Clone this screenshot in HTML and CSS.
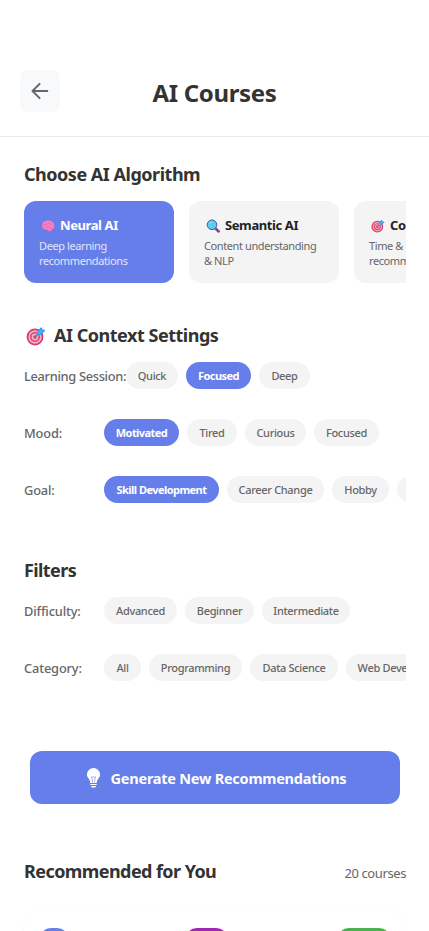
FILE: index.html
```html
<!DOCTYPE html>
<html lang="en">
<head>
<meta charset="utf-8">
<title>AI Courses</title>
<link rel="stylesheet" href="styles.css">
</head>
<body>
<svg class="defs" width="0" height="0" aria-hidden="true">
  <symbol id="target" viewBox="0 0 20 20">
    <circle cx="9" cy="11" r="8.4" fill="#d83b64"/>
    <circle cx="9" cy="11" r="6.7" fill="#efb2c8"/>
    <circle cx="9" cy="11" r="5" fill="#dc4770"/>
    <circle cx="9" cy="11" r="3.4" fill="#efb2c8"/>
    <circle cx="9" cy="11" r="1.7" fill="#d83b64"/>
    <path d="M9 11 15 5" stroke="#4a7fb5" stroke-width="1.3"/>
    <path d="M11.200 5.200 15.300 1l1.200 2.300 3 1-4.400 4.700-3.400.1z" fill="#3d9df0"/>
    <path d="m12.500 7.800 4.200-4.200" stroke="#70c5ff" stroke-width="1"/>
  </symbol>
</svg>
<header class="header">
  <button class="back" aria-label="Back">
    <svg width="18" height="18" viewBox="0 0 18 18" fill="none" stroke="#666" stroke-width="2" stroke-linecap="round" stroke-linejoin="round"><path d="M16.300 9H1.800M8.600 1.900 1.500 9l7.100 7.100"/></svg>
  </button>
  <h1>AI Courses</h1>
</header>
<main class="content">
  <section class="algorithms">
    <h2>Choose AI Algorithm</h2>
    <div class="cards">
      <article class="algorithm active">
        <h3><svg width="14" height="14" viewBox="0 0 14 14"><path d="M1 7.400C.6 4 3 1.700 5.800 1.700c4-1 7.400 1.500 7.500 5 .1 2.200-1 3.400-2.400 3.800-.2 1.600-1.700 2.100-3.200 1.400-1.200-.7-1.600-1.600-2.800-1.500C2.800 10.500 1.200 9.500 1 7.400z" fill="#f77fbe"/><path d="M2.500 7c1-2 2.300-1.300 3.300-2.500M4.500 8.500c1.500.5 2-1.500 3.800-1M7.500 3.500c.3 1.500 2 .8 2.700 2.200M8 9.800c1-.9 2.300-.2 3.200-1.400" fill="none" stroke="#e05cab" stroke-width=".8"/></svg><span>Neural AI</span></h3>
        <p>Deep learning<br>recommendations</p>
      </article>
      <article class="algorithm">
        <h3><svg width="14" height="14" viewBox="0 0 14 14"><path d="m9.500 9.500 3.200 3" stroke="#874684" stroke-width="2.500" stroke-linecap="round"/><circle cx="6" cy="5.800" r="4.800" fill="#5ccbee" stroke="#425ca0"/><path d="M3.500 5A3 3 0 0 1 6 3" fill="none" stroke="#a4eaff"/></svg><span>Semantic AI</span></h3>
        <p>Content understanding<br>&amp; NLP</p>
      </article>
      <article class="algorithm">
        <h3><svg width="14" height="14"><use href="#target"/></svg><span>Contextual AI</span></h3>
        <p>Time &amp; mood<br>recommendations</p>
      </article>
    </div>
  </section>

  <section class="context">
    <h2><svg width="20" height="20"><use href="#target"/></svg><span>AI Context Settings</span></h2>
    <div class="row"><span class="label session">Learning Session:</span><div class="chips"><span class="chip w52">Quick</span><span class="chip w65 active">Focused</span><span class="chip w51">Deep</span></div></div>
    <div class="row"><span class="label">Mood:</span><div class="chips"><span class="chip w75 active">Motivated</span><span class="chip w50">Tired</span><span class="chip w61">Curious</span><span class="chip w65">Focused</span></div></div>
    <div class="row"><span class="label">Goal:</span><div class="chips"><span class="chip w115 active">Skill Development</span><span class="chip w97">Career Change</span><span class="chip w57">Hobby</span><span class="chip w75">Academic</span></div></div>
  </section>

  <section class="filters">
    <h2>Filters</h2>
    <div class="row"><span class="label">Difficulty:</span><div class="chips"><span class="chip w73">Advanced</span><span class="chip w69">Beginner</span><span class="chip w88">Intermediate</span></div></div>
    <div class="row"><span class="label">Category:</span><div class="chips"><span class="chip w37">All</span><span class="chip w93">Programming</span><span class="chip w88">Data Science</span><span class="chip w115">Web Development</span></div></div>
  </section>

  <button class="generate">
    <svg width="15" height="20" viewBox="0 0 15 20" fill="#fff"><path d="M7.500 0a6.600 6.600 0 0 0-6.600 6.600c0 3.300 3.400 4.600 3.400 8.400h6.400c0-3.800 3.400-5.100 3.400-8.400A6.600 6.600 0 0 0 7.500 0z"/><path d="M5 8.500c.8 1 1.700 1 2.500 0 .8 1 1.700 1 2.500 0M5.800 9l.7 5.500M9.200 9l-.7 5.500" fill="none" stroke="#667eea" stroke-width=".6"/><path d="M4.300 16h6.400v1.100H4.300zM5 18h5l-.8 1.500H5.800z"/></svg>
    <span>Generate New Recommendations</span>
  </button>

  <section class="recommended">
    <div class="heading"><h2>Recommended for You</h2><span class="count">20 courses</span></div>
    <article class="course"><i class="badge blue"></i><i class="badge purple"></i><i class="badge green"></i></article>
  </section>
</main>
</body>
</html>
```
FILE: styles.css
```css
* { box-sizing: border-box; }
html { height: 931px; overflow: hidden; }
body { margin: 0; height: 931px; overflow: hidden; background: #fff; color: #333; font-family: "Noto Sans", "Open Sans", sans-serif; }
h1, h2, h3, p { margin: 0; }
button { border: 0; padding: 0; font-family: inherit; }
.defs { display: block; height: 0; }
.header { height: 137px; padding: 70px 20px 0; display: grid; grid-template-columns: 40px 1fr 40px; border-bottom: 1px solid #e9e9e9; }
.back { width: 40px; height: 42px; border-radius: 8px; background: #f8f9fb; display: grid; place-items: center; }
.header h1 { padding-top: 7px; font-size: 24px; line-height: 32px; font-weight: 700; text-align: center; letter-spacing: -.35px; }
.content { padding: 0 23px 0 24px; }
h2 { display: flex; align-items: center; font-size: 18px; line-height: 24px; font-weight: 700; letter-spacing: -.48px; white-space: nowrap; }
h2 span { margin-top: -1px; }
.algorithms { padding-top: 25px; height: 187px; }
.cards { margin-top: 15px; display: flex; gap: 15px; overflow: hidden; }
.algorithm { flex: 0 0 150px; height: 82px; padding: 15px; border-radius: 12px; background: #f4f4f4; white-space: nowrap; }
.algorithm h3 { display: flex; align-items: center; gap: 5px; padding-left: 2px; font-size: 13px; line-height: 19px; font-weight: 700; letter-spacing: -.4px; color: #222; }
.algorithm h3 svg { flex: none; }
.algorithm p { margin-top: 3px; font-size: 11px; line-height: 15px; color: #666; letter-spacing: -.4px; }
.algorithm.active { background: #667eea; }
.algorithm.active h3 { color: #fff; }
.algorithm.active p { color: #e0e5fb; }
.context h2 { gap: 8px; padding-left: 2px; }
.context { height: 235px; }
.row { display: flex; align-items: center; height: 27px; margin-bottom: 30px; }
.context h2 { margin-bottom: 15px; }
.filters h2 { margin-bottom: 14px; letter-spacing: -.6px; }
.label { min-width: 80px; font-size: 12.800px; line-height: 20px; font-weight: 500; color: #666; white-space: nowrap; letter-spacing: -.15px; }
.session { width: 102px; letter-spacing: -.3px; }
.chips { display: flex; flex: 1; min-width: 0; gap: 8px; overflow: hidden; }
.chip { flex: none; height: 27px; border-radius: 14px; background: #f4f4f4; color: #666; font-size: 11px; line-height: 27px; font-weight: 500; text-align: center; letter-spacing: -.33px; white-space: nowrap; }
.chip.active { background: #667eea; color: #fff; font-weight: 700; letter-spacing: -.55px; }
.w37 { width: 37px; } .w50 { width: 50px; } .w51 { width: 51px; }
.w52 { width: 52px; } .w57 { width: 57px; } .w61 { width: 61px; }
.w65 { width: 65px; } .w69 { width: 69px; } .w73 { width: 73px; }
.w75 { width: 75px; } .w88 { width: 88px; } .w93 { width: 93px; }
.w97 { width: 97px; } .w115 { width: 115px; }
.filters { height: 192px; padding-top: 0; margin-top: -1px; margin-bottom: 1px; }
.filters h2 + .row { margin-top: 15px; }
.filters h2 { margin-bottom: 0; }
.generate { display: flex; width: 370px; height: 53px; margin-left: 6px; padding-left: 2px; border-radius: 12px; background: #667eea; color: #fff; align-items: center; justify-content: center; gap: 10px; font-size: 14.500px; font-weight: 700; letter-spacing: -.24px; white-space: nowrap; }
.generate span { padding-top: 1px; }
.recommended { padding-top: 55px; }
.heading { display: flex; justify-content: space-between; align-items: center; height: 24px; }
.heading h2 { letter-spacing: -.57px; }
.count { font-size: 13px; line-height: 20px; color: #666; letter-spacing: -.4px; padding-top: 3px; }
.course { margin-top: 28px; height: 160px; padding: 17px 15px; display: flex; justify-content: space-between; border-radius: 16px; box-shadow: 0 0 2px rgba(0,0,0,.05); }
.badge { height: 24px; border-radius: 12px; }
.blue { width: 30px; background: #667eea; }
.purple { width: 43px; margin-left: 6px; background: #9c27b0; }
.green { width: 54px; background: #4caf50; }
```
